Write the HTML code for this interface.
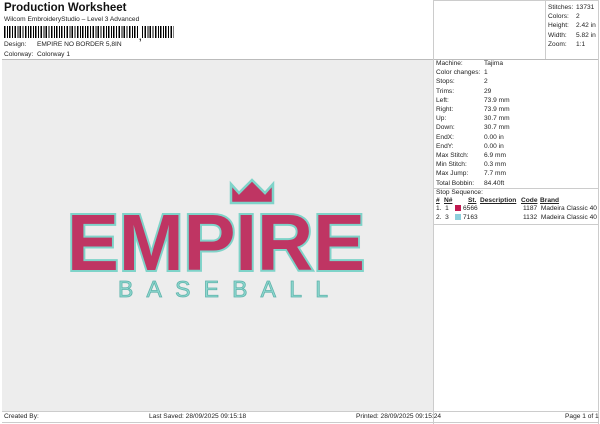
<!DOCTYPE html>
<html><head><style>
body{margin:0;width:600px;height:424px;background:#fff;font-family:"Liberation Sans",sans-serif;font-size:6.6px;color:#222;position:relative;overflow:hidden}
.a{position:absolute;white-space:nowrap}
.ln{position:absolute;background:#bbb}
</style></head><body>
<div class="a" style="left:4px;top:2px;font-size:11.5px;font-weight:bold;color:#111">Production Worksheet</div>
<div class="a" style="left:4px;top:16px">Wilcom EmbroideryStudio – Level 3 Advanced</div>
<div class="a" style="left:4px;top:26px;width:170px;height:12px;background:repeating-linear-gradient(90deg,#000 0 1.5px,#fff 1.5px 3px,#000 3px 4px,#fff 4px 5.2px)"></div>
<div class="a" style="left:138px;top:26px;width:3px;height:12px;background:#fff"></div>
<div class="a" style="left:139px;top:32px;font-weight:bold;font-size:9px">,</div>
<div class="a" style="left:4px;top:41px">Design:</div><div class="a" style="left:37px;top:41px">EMPIRE NO BORDER 5,8IN</div>
<div class="a" style="left:4px;top:51px">Colorway:</div><div class="a" style="left:37px;top:51px">Colorway 1</div>
<div class="ln" style="left:2px;top:59px;width:596px;height:1px"></div>
<div class="ln" style="left:433px;top:0;width:1px;height:424px;background:#ccc"></div>
<div class="ln" style="left:598px;top:0;width:1px;height:424px;background:#ccc"></div>
<div class="ln" style="left:433px;top:0;width:166px;height:1px;background:#ccc"></div>
<div class="ln" style="left:545px;top:0;width:1px;height:59px;background:#ccc"></div>
<div class="a" style="left:2px;top:60px;width:431px;height:351px;background:#ededed"></div>
<div class="a" style="left:548px;top:3px;line-height:9.2px">Stitches:<br>Colors:<br>Height:<br>Width:<br>Zoom:</div>
<div class="a" style="left:576px;top:3px;line-height:9.2px">13731<br>2<br>2.42 in<br>5.82 in<br>1:1</div>
<div class="a" style="left:436px;top:59px;line-height:9.2px">Machine:<br>Color changes:<br>Stops:<br>Trims:<br>Left:<br>Right:<br>Up:<br>Down:<br>EndX:<br>EndY:<br>Max Stitch:<br>Min Stitch:<br>Max Jump:<br>Total Bobbin:</div>
<div class="a" style="left:484px;top:59px;line-height:9.2px">Tajima<br>1<br>2<br>29<br>73.9 mm<br>73.9 mm<br>30.7 mm<br>30.7 mm<br>0.00 in<br>0.00 in<br>6.9 mm<br>0.3 mm<br>7.7 mm<br>84.40ft</div>
<div class="ln" style="left:434px;top:188px;width:164px;height:1px;background:#ccc"></div>
<div class="a" style="left:436px;top:189px">Stop Sequence:</div>
<div class="a" style="left:436px;top:197px;font-weight:bold;text-decoration:underline">#</div>
<div class="a" style="left:444px;top:197px;font-weight:bold;text-decoration:underline">N#</div>
<div class="a" style="left:468px;top:197px;font-weight:bold;text-decoration:underline">St.</div>
<div class="a" style="left:480px;top:197px;font-weight:bold;text-decoration:underline">Description</div>
<div class="a" style="left:521px;top:197px;font-weight:bold;text-decoration:underline">Code</div>
<div class="a" style="left:540px;top:197px;font-weight:bold;text-decoration:underline">Brand</div>
<div class="a" style="left:436px;top:205px">1.&nbsp; 1</div><div class="a" style="left:455px;top:205px;width:6px;height:6px;background:#c01a50"></div><div class="a" style="left:463px;top:205px">6566</div><div class="a" style="left:523px;top:205px">1187&nbsp; Madeira Classic 40</div>
<div class="a" style="left:436px;top:214px">2.&nbsp; 3</div><div class="a" style="left:455px;top:214px;width:6px;height:6px;background:#8ccfdc"></div><div class="a" style="left:463px;top:214px">7163</div><div class="a" style="left:523px;top:214px">1132&nbsp; Madeira Classic 40</div>
<div class="ln" style="left:434px;top:224px;width:164px;height:1px;background:#ccc"></div>
<svg class="a" style="left:0;top:0" width="433" height="411">
<polygon points="231,203 231,184 239,193 252,180 265,193 273,184 273,203" fill="#bf3563" stroke="#7fd3c9" stroke-width="2.5"/>
<text x="67" y="270" font-family="Liberation Sans" font-weight="bold" font-size="80" textLength="298" lengthAdjust="spacingAndGlyphs" fill="#bf3563" stroke="#7fd3c9" stroke-width="4" paint-order="stroke">EMPIRE</text>
<text x="118" y="297" font-family="Liberation Sans" font-size="23" textLength="210" lengthAdjust="spacing" fill="#8fd8cf" stroke="#5fb3ab" stroke-width="0.8">BASEBALL</text>
</svg>
<div class="ln" style="left:2px;top:411px;width:596px;height:1px;background:#ccc"></div>
<div class="a" style="left:4px;top:413px">Created By:</div>
<div class="a" style="left:149px;top:413px">Last Saved: 28/09/2025 09:15:18</div>
<div class="a" style="left:356px;top:413px">Printed: 28/09/2025 09:15:24</div>
<div class="a" style="left:565px;top:413px">Page 1 of 1</div>
<div class="ln" style="left:2px;top:422px;width:596px;height:1px;background:#ccc"></div>
</body></html>
